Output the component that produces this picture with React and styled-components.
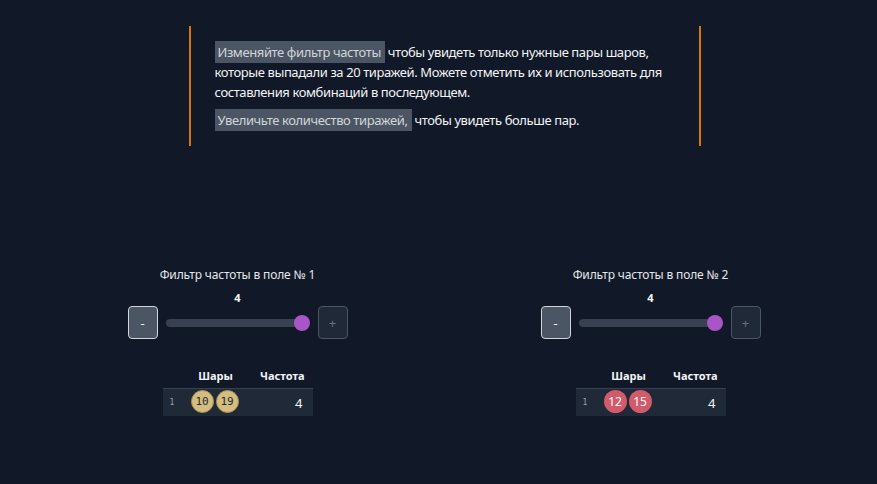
import styled, { createGlobalStyle } from "styled-components";

const GlobalStyle = createGlobalStyle`
  body {
    margin: 0;
    background: #111827;
    font-family: "Noto Sans", "Open Sans", sans-serif;
    color: #f3f4f6;
  }
`;

const Page = styled.div`
  min-height: 484px;
  padding-left: 12px;
  padding-top: 26px;
  box-sizing: border-box;
`;

const Notice = styled.div`
  width: 512px;
  margin: 0 auto;
  box-sizing: border-box;
  border-left: 2px solid #d97706;
  border-right: 2px solid #d97706;
  padding: 16px 24px;
  font-size: 13px;
  letter-spacing: -0.4px;
  line-height: 20px;
`;

const Para = styled.p`
  margin: 0;
  & + & {
    margin-top: 8px;
  }
`;

const Mark = styled.span`
  background: #4b5563;
  color: #d1d5db;
  padding: 2px 4px 2px 3px;
`;

const Filters = styled.div`
  display: grid;
  grid-template-columns: 1fr 1fr;
  margin: 122px 20px 0 19px;
`;

const Column = styled.div`
  display: flex;
  flex-direction: column;
  align-items: center;
`;

const Title = styled.div`
  font-size: 12px;
  line-height: 14px;
  color: #e5e7eb;
  letter-spacing: -0.15px;
`;

const Value = styled.div`
  font-size: 11px;
  font-weight: 700;
  line-height: 14px;
  margin-top: 9px;
`;

const Controls = styled.div`
  display: flex;
  align-items: center;
  gap: 8px;
  margin-top: 1px;
`;

const StepButton = styled.button`
  width: 30px;
  height: 33px;
  box-sizing: border-box;
  border-radius: 4px;
  font-family: inherit;
  font-size: 13px;
  padding: 0;
  border: 1px solid ${(p) => (p.$active ? "#d1d5db" : "#4b5563")};
  background: ${(p) => (p.$active ? "#4b5563" : "#1f2937")};
  color: ${(p) => (p.$active ? "#f9fafb" : "#6b7280")};
`;

const Track = styled.div`
  position: relative;
  width: 136px;
  margin-right: 8px;
  height: 8px;
  border-radius: 4px;
  background: #374151;
`;

const Thumb = styled.div`
  position: absolute;
  top: 50%;
  width: 16px;
  height: 16px;
  border-radius: 50%;
  background: #a855c7;
  transform: translate(-50%, -50%);
`;

const Table = styled.table`
  margin-top: 30px;
  width: 150px;
  border-collapse: collapse;
  font-size: 11px;
`;

const Th = styled.th`
  font-weight: 700;
  line-height: 14px;
  padding: 0 8px 5px 0;
  color: #f3f4f6;
  text-align: ${(p) => p.$align || "center"};
`;

const Row = styled.tr`
  background: #1f2937;
  border-top: 1px solid #374151;
`;

const Index = styled.td`
  width: 20px;
  padding-left: 7px;
  font-family: "DejaVu Sans Mono", monospace;
  font-size: 8px;
  color: #9ca3af;
  height: 25px;
`;

const Balls = styled.td`
  display: flex;
  gap: 2px;
  padding: 1px 0;
  align-items: center;
  height: 25px;
  box-sizing: border-box;
`;

const Ball = styled.span`
  width: 23px;
  height: 23px;
  border-radius: 50%;
  box-sizing: border-box;
  display: flex;
  align-items: center;
  justify-content: center;
  ${(p) =>
    p.$red
      ? `background: #d15b6b; color: #fff; font-size: 12px;`
      : `background: #d4bd7e; border: 1px solid #a58f52; color: #1f2937;
         font-family: "DejaVu Sans Mono", monospace; font-size: 11px;`}
`;

const Freq = styled.td`
  text-align: right;
  padding-right: 10px;
  font-size: 13px;
`;

const filters = [
  { n: 1, balls: ["10", "19"], red: false },
  { n: 2, balls: ["12", "15"], red: true },
];

export default function App() {
  return (
    <Page>
      <GlobalStyle />
      <Notice>
        <Para>
          <Mark>Изменяйте фильтр частоты</Mark> чтобы увидеть только нужные пары шаров,
          которые выпадали за 20 тиражей. Можете отметить их и использовать для
          составления комбинаций в последующем.
        </Para>
        <Para>
          <Mark>Увеличьте количество тиражей,</Mark> чтобы увидеть больше пар.
        </Para>
      </Notice>
      <Filters>
        {filters.map((f) => (
          <Column key={f.n}>
            <Title>Фильтр частоты в поле № {f.n}</Title>
            <Value>4</Value>
            <Controls>
              <StepButton $active>-</StepButton>
              <Track>
                <Thumb style={{ left: "100%" }} />
              </Track>
              <StepButton>+</StepButton>
            </Controls>
            <Table>
              <thead>
                <tr>
                  <Th />
                  <Th>Шары</Th>
                  <Th $align="right">Частота</Th>
                </tr>
              </thead>
              <tbody>
                <Row>
                  <Index>1</Index>
                  <Balls>
                    {f.balls.map((b) => (
                      <Ball key={b} $red={f.red}>
                        {b}
                      </Ball>
                    ))}
                  </Balls>
                  <Freq>4</Freq>
                </Row>
              </tbody>
            </Table>
          </Column>
        ))}
      </Filters>
    </Page>
  );
}
